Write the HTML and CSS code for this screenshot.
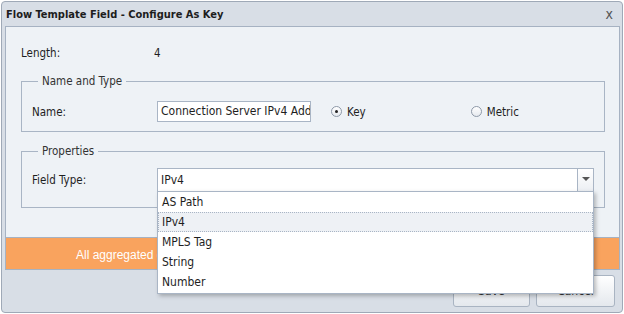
FILE: index.html
```html
<!DOCTYPE html>
<html lang="en">

<head>
    <meta charset="UTF-8">
    <title>Flow Template Field - Configure As Key</title>
    <link rel="stylesheet" href="styles.css">
</head>

<body>
    <div class="window">
        <div class="title-bar">
            <span class="title">Flow Template Field - Configure As Key</span>
            <span class="close">x</span>
        </div>

        <div class="panel">
            <div class="row length-row">
                <span class="label wide">Length:</span>
                <span class="value">4</span>
            </div>

            <fieldset class="group">
                <legend>Name and Type</legend>
                <div class="row">
                    <span class="label">Name:</span>
                    <div class="text-input">Connection Server IPv4 Address</div>
                    <div class="radio-group">
                        <span class="radio checked"></span>
                        <span class="radio-label">Key</span>
                    </div>
                    <div class="radio-group">
                        <span class="radio"></span>
                        <span class="radio-label">Metric</span>
                    </div>
                </div>
            </fieldset>

            <fieldset class="group group-props">
                <legend>Properties</legend>
                <div class="row">
                    <span class="label">Field Type:</span>
                    <div class="combo">
                        <div class="combo-value">IPv4</div>
                        <div class="combo-arrow"><span class="tri"></span></div>
                        <ul class="combo-list">
                            <li>AS Path</li>
                            <li class="selected">IPv4</li>
                            <li>MPLS Tag</li>
                            <li>String</li>
                            <li>Number</li>
                        </ul>
                    </div>
                </div>
            </fieldset>
        </div>

        <div class="warning">All aggregated data for this field will be deleted.</div>

        <div class="buttons">
            <button type="button" class="btn btn-save">Save</button>
            <button type="button" class="btn btn-cancel">Cancel</button>
        </div>
    </div>
</body>

</html>
```

FILE: styles.css
```css
body {
    margin: 0;
    padding: 0;
    background-color: #ffffff;
    font-family: "DejaVu Sans Condensed", "DejaVu Sans", sans-serif;
    font-stretch: condensed;
    font-size: 11.5px;
    color: #1e1e1e;
}

.window {
    width: 622px;
    height: 312px;
    margin: 1px 0 0 1px;
    box-sizing: border-box;
    border: 1px solid #9fa9b7;
    border-radius: 4px;
    background-color: #d8dee6;
}

.title-bar {
    height: 24px;
    display: flex;
    align-items: center;
    justify-content: space-between;
    padding: 0 9px 0 4px;
}

.title {
    font-weight: bold;
    font-size: 11px;
    color: #1d1d1d;
}

.close {
    font-size: 14px;
    color: #555555;
}

.panel {
    margin: 0 2px 0 3px;
    height: 212px;
    box-sizing: border-box;
    border: 1px solid #a6b2c2;
    background-color: #eef2f6;
    padding: 18px 14px 0 15px;
}

.row {
    display: flex;
    align-items: center;
}

.length-row {
    height: 16px;
}

.label {
    width: 125px;
    flex-shrink: 0;
}

.label.wide {
    width: 133px;
}

.group {
    margin: 13px 0 0 0;
    padding: 13px 10px 9px 10px;
    border: 1px solid #a9b5c5;
    min-width: 0;
}

.group legend {
    padding: 0 4px;
    margin-left: 6px;
    line-height: 14px;
    color: #333333;
}

.group-props {
    margin-top: 12px;
    padding-top: 10px;
    padding-bottom: 15px;
}

.text-input {
    width: 154px;
    height: 21px;
    box-sizing: border-box;
    border: 1px solid #a9b5c5;
    background-color: #ffffff;
    padding: 0 3px;
    line-height: 19px;
    font-size: 12px;
    white-space: nowrap;
    overflow: hidden;
}

.radio-group {
    display: flex;
    align-items: center;
    margin-left: 20px;
}

.radio-group + .radio-group {
    margin-left: 105px;
}

.radio {
    width: 11px;
    height: 11px;
    box-sizing: border-box;
    border: 1px solid #8e99a8;
    border-radius: 50%;
    background: linear-gradient(#ffffff, #e6eaef);
    position: relative;
}

.radio.checked::after {
    content: "";
    position: absolute;
    left: 3px;
    top: 3px;
    width: 3px;
    height: 3px;
    border-radius: 50%;
    background-color: #222222;
}

.radio-label {
    margin-left: 5px;
}

.combo {
    position: relative;
    flex: 1;
    height: 24px;
    box-sizing: border-box;
    border: 1px solid #a9b5c5;
    background-color: #ffffff;
    display: flex;
}

.combo-value {
    flex: 1;
    padding-left: 3px;
    line-height: 22px;
    font-size: 12px;
}

.combo-arrow {
    width: 16px;
    border-left: 1px solid #a9b5c5;
    background: linear-gradient(#ffffff, #eceff3);
    display: flex;
    justify-content: center;
    padding-top: 8px;
    box-sizing: border-box;
}

.tri {
    width: 0;
    height: 0;
    border-left: 4px solid transparent;
    border-right: 4px solid transparent;
    border-top: 4px solid #555555;
}

.combo-list {
    position: absolute;
    left: -1px;
    right: -1px;
    top: 22px;
    margin: 0;
    padding: 0 0 1px 0;
    list-style: none;
    background-color: #ffffff;
    border: 1px solid #a9b5c5;
    box-shadow: 2px 2px 4px rgba(0, 0, 0, 0.25);
    z-index: 10;
}

.combo-list li {
    height: 20px;
    line-height: 20px;
    padding-left: 4px;
    font-size: 12px;
    box-sizing: border-box;
}

.combo-list li.selected {
    background-color: #eef1f5;
    border: 1px dotted #a9b5c5;
    line-height: 18px;
    padding-left: 3px;
}

.warning {
    margin: 0 2px 0 3px;
    height: 32px;
    box-sizing: border-box;
    border: 1px solid #a6b2c2;
    border-top: none;
    background-color: #f9a35e;
    color: #ffffff;
    font-family: "Liberation Sans", Arial, sans-serif;
    font-stretch: normal;
    font-size: 12px;
    line-height: 28px;
    padding: 3px 0 0 70px;
}

.buttons {
    display: flex;
    justify-content: flex-end;
    gap: 6px;
    padding: 5px 7px 0 0;
}

.btn {
    height: 32px;
    border: 1px solid #a9b4c2;
    border-radius: 3px;
    background: linear-gradient(#ffffff, #e4e8ed);
    font-family: inherit;
    font-size: 12px;
    color: #333333;
}

.btn-save {
    width: 77px;
}

.btn-cancel {
    width: 79px;
}
```
